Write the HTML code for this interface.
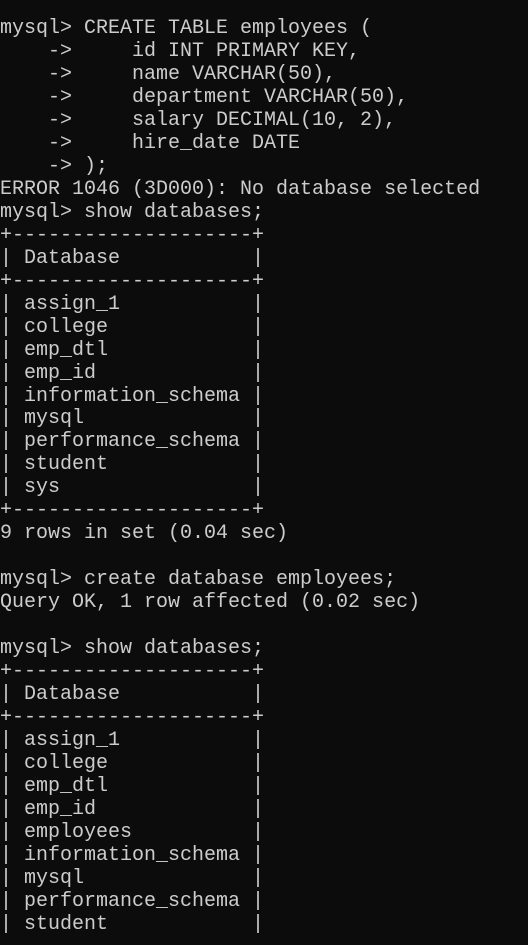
<!DOCTYPE html>
<html><head><meta charset="utf-8"><style>
html,body{margin:0;padding:0;background:#0c0c0c;width:528px;height:945px;overflow:hidden}
pre{margin:0;position:absolute;top:18px;left:0;font-family:"Liberation Mono",monospace;font-size:20px;line-height:22.97px;color:#cccccc;white-space:pre}
</style></head><body><pre>mysql&gt; CREATE TABLE employees (
    -&gt;     id INT PRIMARY KEY,
    -&gt;     name VARCHAR(50),
    -&gt;     department VARCHAR(50),
    -&gt;     salary DECIMAL(10, 2),
    -&gt;     hire_date DATE
    -&gt; );
ERROR 1046 (3D000): No database selected
mysql&gt; show databases;
+--------------------+
| Database           |
+--------------------+
| assign_1           |
| college            |
| emp_dtl            |
| emp_id             |
| information_schema |
| mysql              |
| performance_schema |
| student            |
| sys                |
+--------------------+
9 rows in set (0.04 sec)

mysql&gt; create database employees;
Query OK, 1 row affected (0.02 sec)

mysql&gt; show databases;
+--------------------+
| Database           |
+--------------------+
| assign_1           |
| college            |
| emp_dtl            |
| emp_id             |
| employees          |
| information_schema |
| mysql              |
| performance_schema |
| student            |
</pre></body></html>
